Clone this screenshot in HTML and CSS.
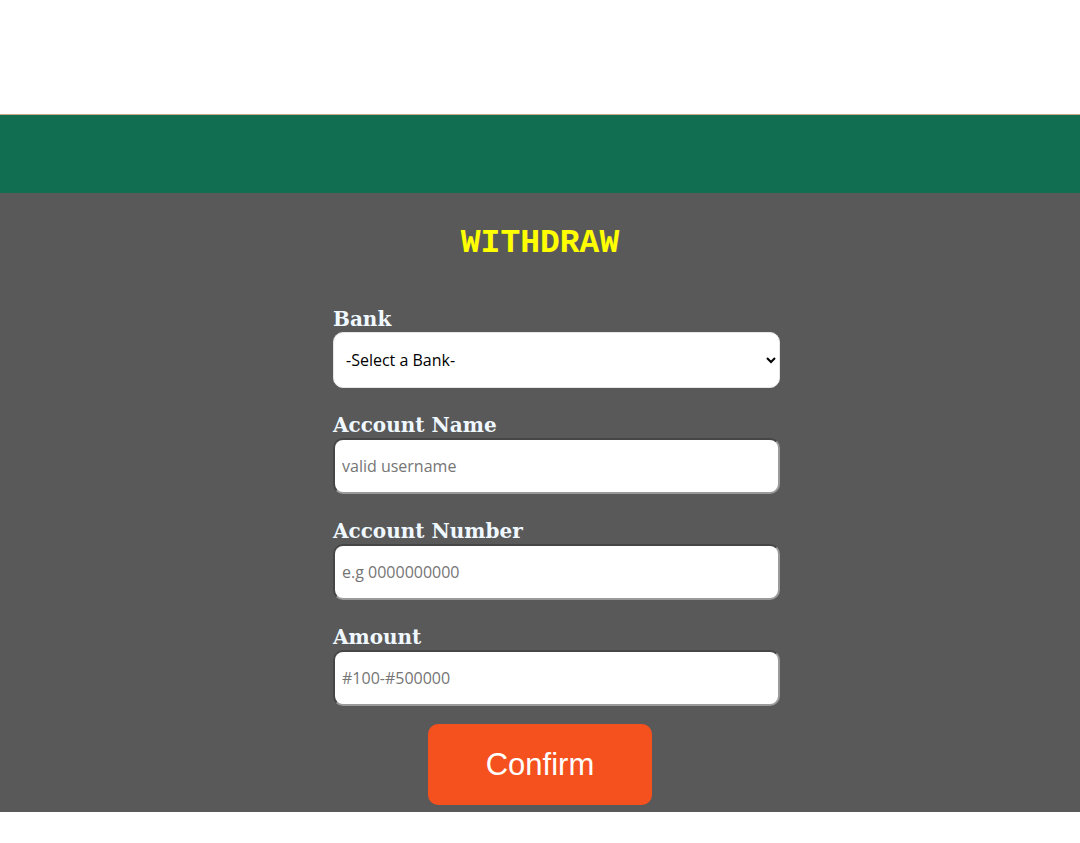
FILE: index.html
```html
<!DOCTYPE html>
<html>
<head>
<meta charset="utf-8">
<link rel="stylesheet" href="styles.css">
</head>
<body>
<header class="top"></header>
<div class="band"></div>
<main class="panel">
  <h1 class="title">WITHDRAW</h1>
  <form class="form">
    <div class="field">
      <label class="label" for="bank">Bank</label>
      <select class="select" id="bank">
        <option>-Select a Bank-</option>
      </select>
    </div>
    <div class="field">
      <label class="label" for="name">Account Name</label>
      <input class="input" id="name" type="text" placeholder="valid username">
    </div>
    <div class="field">
      <label class="label" for="num">Account Number</label>
      <input class="input" id="num" type="text" placeholder="e.g 0000000000">
    </div>
    <div class="field last">
      <label class="label" for="amt">Amount</label>
      <input class="input" id="amt" type="text" placeholder="#100-#500000">
    </div>
  </form>
  <div class="actions">
    <button class="btn" type="button">Confirm</button>
  </div>
</main>
</body>
</html>
```

FILE: styles.css
```css
html, body {
  margin: 0;
  padding: 0;
  background: #ffffff;
}
body {
  font-family: "Liberation Sans", Arial, sans-serif;
}
.top {
  height: 114px;
  background: #ffffff;
  border-bottom: 1px solid #c9aa86;
}
.band {
  height: 78px;
  background: #126e51;
}
.panel {
  background: #595959;
  padding: 31px 0 7px;
}
.title {
  margin: 0;
  text-align: center;
  font-family: "Liberation Mono", "DejaVu Sans Mono", monospace;
  font-weight: bold;
  font-size: 33px;
  line-height: 40px;
  color: #ffff00;
}
.form {
  width: 447px;
  margin: 42px auto 0;
  padding-left: 33px;
}
.field {
  display: flex;
  flex-direction: column;
  margin-bottom: 24px;
}
.field.last {
  margin-bottom: 0;
}
.label {
  font-family: "DejaVu Serif", Georgia, serif;
  font-weight: bold;
  font-size: 20px;
  line-height: 26px;
  color: #f0f8ff;
}
.select,
.input {
  box-sizing: border-box;
  width: 447px;
  height: 56px;
  border-radius: 10px;
  background: #ffffff;
  font-family: "Open Sans", sans-serif;
  font-size: 16px;
  color: #000;
}
.select {
  border: 1px solid #e6e6e6;
  padding: 0 8px;
  appearance: auto;
}
.input {
  border: 2px inset #9a9a9a;
  padding: 0 7px;
}
.input::placeholder {
  color: #757575;
}
.actions {
  display: flex;
  justify-content: center;
  margin-top: 18px;
}
.btn {
  width: 224px;
  height: 81px;
  border: none;
  border-radius: 10px;
  background: #f5511e;
  color: #ffffff;
  font-family: "Liberation Sans", Arial, sans-serif;
  font-size: 31px;
}
```
